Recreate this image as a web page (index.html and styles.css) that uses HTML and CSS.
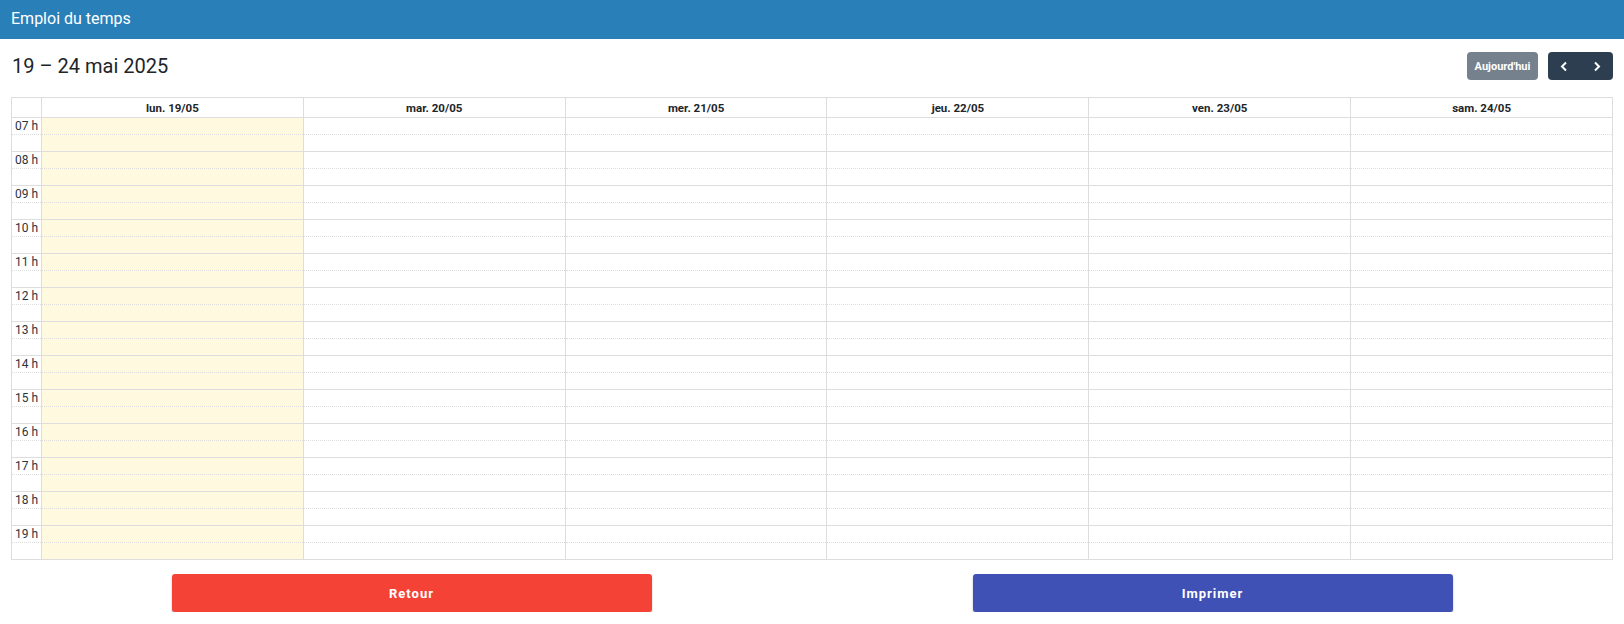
FILE: index.html
```html
<!DOCTYPE html>
<html lang="fr">
<head>
    <meta charset="UTF-8">
    <meta name="viewport" content="width=device-width, initial-scale=1.0">
    <title>Emploi du temps</title>
    <link rel="stylesheet" href="styles.css">
</head>
<body>
    <div class="topbar">Emploi du temps</div>

    <div class="page">
        <div class="toolbar">
            <h2 class="range">19 – 24 mai 2025</h2>
            <div class="nav">
                <button class="today" disabled>Aujourd'hui</button>
                <div class="arrows">
                    <button class="arrow" title="Semaine précédente">
                        <svg width="8" height="11" viewBox="0 0 8 11"><path d="M6 1.5 2 5.5l4 4" fill="none" stroke="#fff" stroke-width="2"/></svg>
                    </button>
                    <button class="arrow" title="Semaine suivante">
                        <svg width="8" height="11" viewBox="0 0 8 11"><path d="M2 1.5l4 4-4 4" fill="none" stroke="#fff" stroke-width="2"/></svg>
                    </button>
                </div>
            </div>
        </div>

        <table class="week" id="week">
            <colgroup>
                <col class="axis-col">
                <col><col><col><col><col><col>
            </colgroup>
            <thead>
                <tr>
                    <th></th>
                    <th>lun. 19/05</th>
                    <th>mar. 20/05</th>
                    <th>mer. 21/05</th>
                    <th>jeu. 22/05</th>
                    <th>ven. 23/05</th>
                    <th>sam. 24/05</th>
                </tr>
            </thead>
            <tbody id="slots"></tbody>
        </table>

        <div class="actions">
            <div><button class="btn retour">Retour</button></div>
            <div><button class="btn imprimer" onclick="window.print()">Imprimer</button></div>
        </div>
    </div>

    <script>
        // une ligne par demi-heure, de 7h à 19h30
        var tbody = document.getElementById("slots");
        for (var h = 7; h <= 19; h++) {
            for (var half = 0; half < 2; half++) {
                var tr = document.createElement("tr");
                tr.className = half ? "minor" : "major";
                var axis = document.createElement("td");
                axis.className = "axis";
                if (!half) axis.innerText = (h < 10 ? "0" + h : h) + " h";
                tr.appendChild(axis);
                for (var d = 0; d < 6; d++) {
                    var td = document.createElement("td");
                    if (d == 0) td.className = "today-col";
                    tr.appendChild(td);
                }
                tbody.appendChild(tr);
            }
        }
    </script>
</body>
</html>
```

FILE: styles.css
```css
body{
    margin: 0;
    font-family: Roboto, "Liberation Sans", sans-serif;
    color: #212529;
    background-color: white;
}
.topbar{
    background-color: #2980b9;
    color: white;
    height: 39px;
    line-height: 37px;
    padding-left: 11px;
    font-size: 16px;
}
.page{
    padding: 0 11px;
}
.toolbar{
    display: flex;
    align-items: center;
    justify-content: space-between;
    margin-top: 13px;
    height: 28px;
    margin-bottom: 17px;
}
.range{
    margin: 0;
    font-size: 20px;
    font-weight: 400;
    padding-left: 1px;
}
.nav{
    display: flex;
    gap: 10px;
}
.today{
    height: 28px;
    width: 71px;
    border: none;
    border-radius: 4px;
    background-color: #2c3e50;
    opacity: 0.65;
    color: white;
    font-family: inherit;
    font-size: 11px;
    font-weight: 700;
    padding: 0;
}
.arrows{
    display: flex;
    background-color: #2c3e50;
    border-radius: 4px;
    overflow: hidden;
}
.arrow{
    width: 32.5px;
    height: 28px;
    border: none;
    background: none;
    padding: 0;
    display: flex;
    align-items: center;
    justify-content: center;
    cursor: pointer;
}
.week{
    width: 100%;
    border-collapse: collapse;
    table-layout: fixed;
    border: 1px solid #ddd;
}
.axis-col{
    width: 30px;
}
.week th{
    border: 1px solid #ddd;
    height: 19px;
    padding: 0;
    font-size: 11.5px;
    font-weight: 700;
    vertical-align: middle;
}
.week td{
    border-left: 1px solid #ddd;
    border-right: 1px solid #ddd;
    height: 16px;
    padding: 0;
}
.week tr.major td{
    border-top: 1px solid #ddd;
}
.week tr.minor td{
    border-top: 1px dotted #ddd;
}
.week td.axis{
    font-size: 12px;
    color: #2c3440;
    text-align: right;
    padding-right: 3px;
    vertical-align: top;
    line-height: 16px;
    white-space: nowrap;
}
.week td.today-col{
    background-color: #fffadf;
}
.actions{
    display: grid;
    grid-template-columns: 1fr 1fr;
    margin-top: 14px;
}
.actions div{
    display: flex;
    justify-content: center;
}
.btn{
    width: 480px;
    height: 38px;
    border: none;
    border-radius: 3px;
    color: white;
    font-family: inherit;
    font-size: 13px;
    font-weight: 700;
    letter-spacing: 1px;
    box-shadow: 0 2px 2px rgba(0,0,0,0.3);
    cursor: pointer;
}
.retour{
    background-color: #f44336;
}
.imprimer{
    background-color: #3f51b5;
}
```
